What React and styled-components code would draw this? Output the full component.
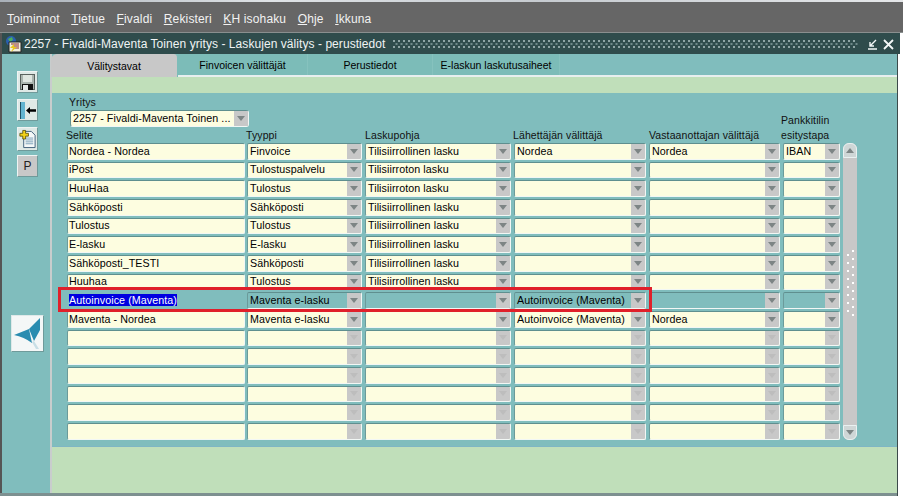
import React from "react";
import styled, { createGlobalStyle } from "styled-components";

const Global = createGlobalStyle`
  html, body { margin: 0; padding: 0; background: #fff; }
  body { font-family: "Liberation Sans", Arial, sans-serif; font-size: 11px; color: #000; }
  * { box-sizing: border-box; }
`;

const Page = styled.div`
  width: 903px;
  height: 496px;
  display: flex;
  flex-direction: column;
  overflow: hidden;
  position: relative;
  background: #fff;
`;
const TopStrip = styled.div`
  height: 2px;
  flex: none;
  background: linear-gradient(90deg, #a9b0b8, #dfe3e6 30%, #c6cbd0 60%, #e5e7e9);
`;
const MenuBar = styled.ul`
  height: 31px;
  flex: none;
  margin: 0;
  padding: 9px 0 0 7px;
  list-style: none;
  display: flex;
  gap: 11.5px;
  background: #666666;
  border-bottom: 1px solid #8a8f8f;
`;
const MenuItem = styled.li`
  color: #f2f2f2;
  font-size: 12px;
  line-height: 16px;
  letter-spacing: 0.15px;
  u { text-underline-offset: 1px; }
`;
const Window = styled.div`
  flex: 1;
  display: flex;
  flex-direction: column;
  min-height: 0;
  margin-right: 5px;
  background: #80bdbd;
  border-left: 2px solid #555;
  border-right: 1px solid #3c4a4a;
`;
const TitleBar = styled.div`
  height: 21px;
  flex: none;
  display: flex;
  align-items: center;
  margin-right: -3px;
  padding: 1px 6px 0 3px;
  background: #2f4c4c;
  color: #f0f4f4;
  font-size: 12px;
  letter-spacing: 0.06px;
`;
const TitleText = styled.span`
  margin-left: 2px;
  white-space: nowrap;
`;
const TitleDots = styled.div`
  flex: 1;
  height: 9px;
  margin: 0 9px 0 8px;
  background-image:
    radial-gradient(circle at 1px 1px, #8fa5a5 0.8px, transparent 1px),
    radial-gradient(circle at 1px 1px, #6f8a8a 0.8px, transparent 1px);
  background-size: 5px 6px;
  background-position: 0 0, 2.5px 3px;
`;
const TitleButtons = styled.div`
  display: flex;
  align-items: center;
  gap: 5px;
`;
const Body = styled.div`
  flex: 1;
  display: flex;
  min-height: 0;
`;
const Rail = styled.aside`
  width: 47px;
  flex: none;
  display: flex;
  flex-direction: column;
  align-items: flex-start;
  padding: 17px 0 0 15px;
`;
const ToolButton = styled.button`
  width: 21px;
  height: ${(p) => p.$h || 22}px;
  margin: 0 0 ${(p) => p.$gap ?? 6}px;
  padding: 0;
  display: flex;
  align-items: center;
  justify-content: center;
  background: ${(p) => p.$bg || "#dfe9e6"};
  border: 1px solid #eef4f3;
  border-right-color: #6f9a9a;
  border-bottom-color: #6f9a9a;
  font: 12px "Liberation Sans", Arial, sans-serif;
  color: #222;
`;
const LogoButton = styled.div`
  width: 33px;
  height: 37px;
  margin: 132px 0 0 -6px;
  background: #f4f7f7;
  border: 1px solid #dfe9e9;
  border-right-color: #6f9a9a;
  border-bottom-color: #6f9a9a;
  display: flex;
  align-items: center;
  justify-content: center;
`;
const Main = styled.main`
  flex: 1;
  min-width: 0;
  display: flex;
  flex-direction: column;
  border-left: 2px solid #c8cdcd;
  margin-left: 1px;
`;
const Tabs = styled.div`
  height: 23px;
  flex: none;
  display: flex;
  margin-left: -1px;
  border-bottom: 2px solid #e8efef;
`;
const Tab = styled.div`
  width: ${(p) => p.$w}px;
  height: ${(p) => (p.$active ? 23 : 21)}px;
  flex: none;
  display: flex;
  align-items: center;
  justify-content: center;
  padding-top: ${(p) => (p.$active ? 0 : 1)}px;
  font-size: 10.5px;
  background: ${(p) => (p.$active ? "#c8c8c8" : "#7cbcb8")};
  border-radius: ${(p) => (p.$active ? "6px 4px 0 0" : "0")};
  border-right: 1px solid ${(p) => (p.$active ? "#7cbcb8" : "#86c2be")};
  z-index: ${(p) => (p.$active ? 1 : 0)};
`;
const GreenStrip = styled.div`
  height: 16px;
  flex: none;
  background: #c0dfba;
`;
const Panel = styled.section`
  flex: 1;
  min-height: 0;
  padding: 3px 0 0 15px;
  position: relative;
`;
const CompanyBlock = styled.div`
  display: flex;
  flex-direction: column;
  margin-left: 3px;
  width: 179px;
`;
const Label = styled.label`
  display: block;
  font-size: 10.5px;
  line-height: ${(p) => (p.$head ? 15 : 13)}px;
  margin-left: ${(p) => (p.$shift ? -1 : 0)}px;
  letter-spacing: 0.1px;
  white-space: pre-line;
  color: #111;
`;
const Columns = styled.div`
  display: grid;
  grid-template-columns: 180px 118px 149px 135px 134px 60px 16px;
  grid-auto-rows: 16.67px;
  row-gap: 2px;
  align-items: stretch;
`;
const HeaderRow = styled.div`
  display: grid;
  grid-template-columns: 180px 119px 148px 136px 132px 60px;
  height: 30px;
  margin: -14px 0 0 -1px;
  padding-bottom: 1px;
  align-items: end;
`;
const Field = styled.div`
  width: calc(100% - ${(p) => (p.$first ? 2 : 3)}px);
  height: 100%;
  display: flex;
  align-items: center;
  overflow: hidden;
  background: ${(p) => (p.$current ? "#80bdbd" : "#fdfde0")};
  border: 1px solid ${(p) => (p.$bare ? "#80bdbd" : "#f2f7f5")};
  border-top-color: ${(p) => (p.$bare ? "#80bdbd" : "#5f8f8f")};
  border-left-color: ${(p) => (p.$bare ? "#80bdbd" : "#6b9a9a")};
  border-radius: 2px;
`;
const FieldText = styled.span`
  flex: 1;
  min-width: 0;
  padding-left: ${(p) => (p.$pad ? 2 : 1)}px;
  font-size: 10.7px;
  line-height: 13px;
  letter-spacing: 0.08px;
  white-space: nowrap;
  overflow: hidden;
`;
const Selected = styled.span`
  background: #0000e0;
  color: #fff;
`;
const Arrow = styled.div`
  width: 14px;
  flex: none;
  align-self: stretch;
  display: flex;
  align-items: center;
  justify-content: center;
  background: #c8c8c8;
  &::after {
    content: "";
    border-top: 5px solid ${(p) => (p.$faint ? "#bdbdbd" : "#7d8585")};
    border-left: 4px solid transparent;
    border-right: 4px solid transparent;
  }
`;
const CompanySelect = styled.div`
  width: 179px;
  height: 17px;
  margin-top: 1px;
  display: flex;
  align-items: center;
  background: #fdfde0;
  border: 1px solid #5f8f8f;
  border-right-color: #f2f7f5;
  border-bottom-color: #f2f7f5;
  border-radius: 3px;
  padding-left: 1px;
`;
const ScrollBar = styled.div`
  grid-column: 7;
  grid-row: 1 / span 16;
  width: 14px;
  display: flex;
  flex-direction: column;
  background: #c8c8c8;
  border-radius: 6px;
`;
const ScrollEnd = styled.div`
  height: 15px;
  flex: none;
  display: flex;
  align-items: center;
  justify-content: center;
  background: #cfd6d6;
  border: 1px solid #e9f1f1;
  border-radius: ${(p) => (p.$up ? "6px 6px 0 0" : "0 0 6px 6px")};
  &::after {
    content: "";
    ${(p) => (p.$up ? "border-bottom" : "border-top")}: 5px solid #7d8585;
    border-left: 4px solid transparent;
    border-right: 4px solid transparent;
  }
`;
const ScrollTrack = styled.div`
  flex: 1;
  display: flex;
  align-items: center;
  justify-content: center;
`;
const Grip = styled.div`
  width: 7px;
  height: 66px;
  margin-top: -16px;
  background-image:
    radial-gradient(circle at 1px 1px, #fff 1px, transparent 1.2px),
    radial-gradient(circle at 1px 1px, #fff 1px, transparent 1.2px);
  background-size: 10px 8px;
  background-position: 0 4px, 5px 0;
`;
const Highlight = styled.div`
  position: absolute;
  left: 6px;
  top: 194px;
  width: 594px;
  height: 25px;
  border: 3px solid #e0202a;
  pointer-events: none;
`;
const BottomStrip = styled.div`
  height: 47px;
  flex: none;
  background: #c0dfba;
  border-top: 1px solid #7fb6c4;
`;
const WindowFoot = styled.div`
  height: 3px;
  flex: none;
  margin-left: -3px;
  background: #7d9090;
`;

const headers = ["Selite", "Tyyppi", "Laskupohja", "Lähettäjän välittäjä", "Vastaanottajan välittäjä", "Pankkitilin\nesitystapa"];

const rows = [
  ["Nordea - Nordea", "Finvoice", "Tilisiirrollinen lasku", "Nordea", "Nordea", "IBAN"],
  ["iPost", "Tulostuspalvelu", "Tilisiirroton lasku", "", "", ""],
  ["HuuHaa", "Tulostus", "Tilisiirroton lasku", "", "", ""],
  ["Sähköposti", "Sähköposti", "Tilisiirrollinen lasku", "", "", ""],
  ["Tulostus", "Tulostus", "Tilisiirrollinen lasku", "", "", ""],
  ["E-lasku", "E-lasku", "Tilisiirrollinen lasku", "", "", ""],
  ["Sähköposti_TESTI", "Sähköposti", "Tilisiirrollinen lasku", "", "", ""],
  ["Huuhaa", "Tulostus", "Tilisiirrollinen lasku", "", "", ""],
  ["Autoinvoice (Maventa)", "Maventa e-lasku", "", "Autoinvoice (Maventa)", "", ""],
  ["Maventa - Nordea", "Maventa e-lasku", "", "Autoinvoice (Maventa)", "Nordea", ""],
  ["", "", "", "", "", ""],
  ["", "", "", "", "", ""],
  ["", "", "", "", "", ""],
  ["", "", "", "", "", ""],
  ["", "", "", "", "", ""],
  ["", "", "", "", "", ""],
];

const menu = [
  ["T", "oiminnot"],
  ["T", "ietue"],
  ["F", "ivaldi"],
  ["R", "ekisteri"],
  ["K", "H isohaku"],
  ["O", "hje"],
  ["I", "kkuna"],
];

const SaveIcon = () => (
  <svg width="17" height="18" viewBox="0 0 17 18">
    <path d="M1 1h15v16H1z" fill="#59625e" />
    <path d="M2 2h13v14H2z" fill="#aab4ae" />
    <path d="M4 2h9v7H4z" fill="#dfe6e0" />
    <path d="M3 11h11v6H3z" fill="#111" />
    <path d="M4 12h5v5H4z" fill="#e4e8e6" />
  </svg>
);

const ExitIcon = () => (
  <svg width="19" height="19" viewBox="0 0 19 19">
    <path d="M2 1h5v17H2z" fill="#62b4d0" />
    <path d="M2 1h1v17H2z" fill="#1f4f63" />
    <path d="M8 9.5L12 6v2.2h6v2.6h-6V13z" fill="#000" />
  </svg>
);

const NewDocIcon = () => (
  <svg width="20" height="22" viewBox="0 0 20 22">
    <path d="M6 3h8l4 4v13H6z" fill="#f4f8f8" stroke="#3f5f7a" strokeWidth="1" />
    <path d="M8 10h8M8 12h8M8 14h8M8 16h8" stroke="#7aa0b8" strokeWidth="1" />
    <path d="M5 2h3v3h3v3H8v3H5V8H2V5h3z" fill="#f2d21a" stroke="#4a4200" strokeWidth="0.8" />
  </svg>
);

const AppIcon = () => (
  <svg width="17" height="17" viewBox="0 0 17 17">
    <circle cx="6" cy="5" r="5" fill="#2a5fb0" />
    <path d="M3 3l4-2 1 3-3 2z" fill="#4cae5c" />
    <path d="M4 6h12v10H4z" fill="#f3f0e0" stroke="#222" strokeWidth="1" />
    <path d="M6 8h8M9 10h5M9 12h5" stroke="#8a2f2f" strokeWidth="1" />
    <path d="M9 8l-4 4h3l-2 4 6-5H9z" fill="#e8c820" />
  </svg>
);

const MaventaLogo = () => (
  <svg width="31" height="35" viewBox="0 0 31 35">
    <path d="M2 19L17 13L20 27Q12 21 2 19Z" fill="#2a8cb0" />
    <path d="M17 13L28 2V14L22 25Z" fill="#2a8cb0" />
    <path d="M20 26L22 25L27 33L24 33Z" fill="#c9dfe6" />
  </svg>
);

const MinimizeIcon = () => (
  <svg width="11" height="11" viewBox="0 0 11 11">
    <path d="M9 1L3 7M3 3v4h4M1 10h9" stroke="#f4f8f8" strokeWidth="1.4" fill="none" />
  </svg>
);

const CloseIcon = () => (
  <svg width="11" height="11" viewBox="0 0 11 11">
    <path d="M1 1l9 9M10 1l-9 9" stroke="#f4f8f8" strokeWidth="1.8" fill="none" />
  </svg>
);

const App = () => {
  return (
    <Page>
      <Global />
      <TopStrip />
      <MenuBar>
        {menu.map(([key, rest]) => (
          <MenuItem key={key + rest}>
            <u>{key}</u>
            {rest}
          </MenuItem>
        ))}
      </MenuBar>
      <Window>
        <TitleBar>
          <AppIcon />
          <TitleText>2257 - Fivaldi-Maventa Toinen yritys - Laskujen välitys - perustiedot</TitleText>
          <TitleDots />
          <TitleButtons>
            <MinimizeIcon />
            <CloseIcon />
          </TitleButtons>
        </TitleBar>
        <Body>
          <Rail>
            <ToolButton><SaveIcon /></ToolButton>
            <ToolButton><ExitIcon /></ToolButton>
            <ToolButton $h={24} $gap={4}><NewDocIcon /></ToolButton>
            <ToolButton $bg="#c8c8c8">P</ToolButton>
            <LogoButton><MaventaLogo /></LogoButton>
          </Rail>
          <Main>
            <Tabs>
              <Tab $active $w={127}>Välitystavat</Tab>
              <Tab $w={130}>Finvoicen välittäjät</Tab>
              <Tab $w={125}>Perustiedot</Tab>
              <Tab $w={127}>E-laskun laskutusaiheet</Tab>
            </Tabs>
            <GreenStrip />
            <Panel>
              <CompanyBlock>
                <Label $shift>Yritys</Label>
                <CompanySelect>
                  <FieldText>2257 - Fivaldi-Maventa Toinen ...</FieldText>
                  <Arrow />
                </CompanySelect>
              </CompanyBlock>
              <HeaderRow>
                {headers.map((h) => (
                  <Label key={h} $head>{h}</Label>
                ))}
              </HeaderRow>
              <Columns>
                {rows.flatMap((row, r) =>
                  row.map((value, c) => (
                    <Field key={`${r}-${c}`} $first={c === 0} $current={r === 8} $bare={r === 8 && c === 0}>
                      <FieldText $pad={c > 0}>
                        {r === 8 && c === 0 ? <Selected>{value}</Selected> : value}
                      </FieldText>
                      {c > 0 && <Arrow $faint={r > 9} />}
                    </Field>
                  ))
                )}
                <ScrollBar>
                  <ScrollEnd $up />
                  <ScrollTrack><Grip /></ScrollTrack>
                  <ScrollEnd />
                </ScrollBar>
              </Columns>
              <Highlight />
            </Panel>
            <BottomStrip />
          </Main>
        </Body>
        <WindowFoot />
      </Window>
    </Page>
  );
};

export default App;
